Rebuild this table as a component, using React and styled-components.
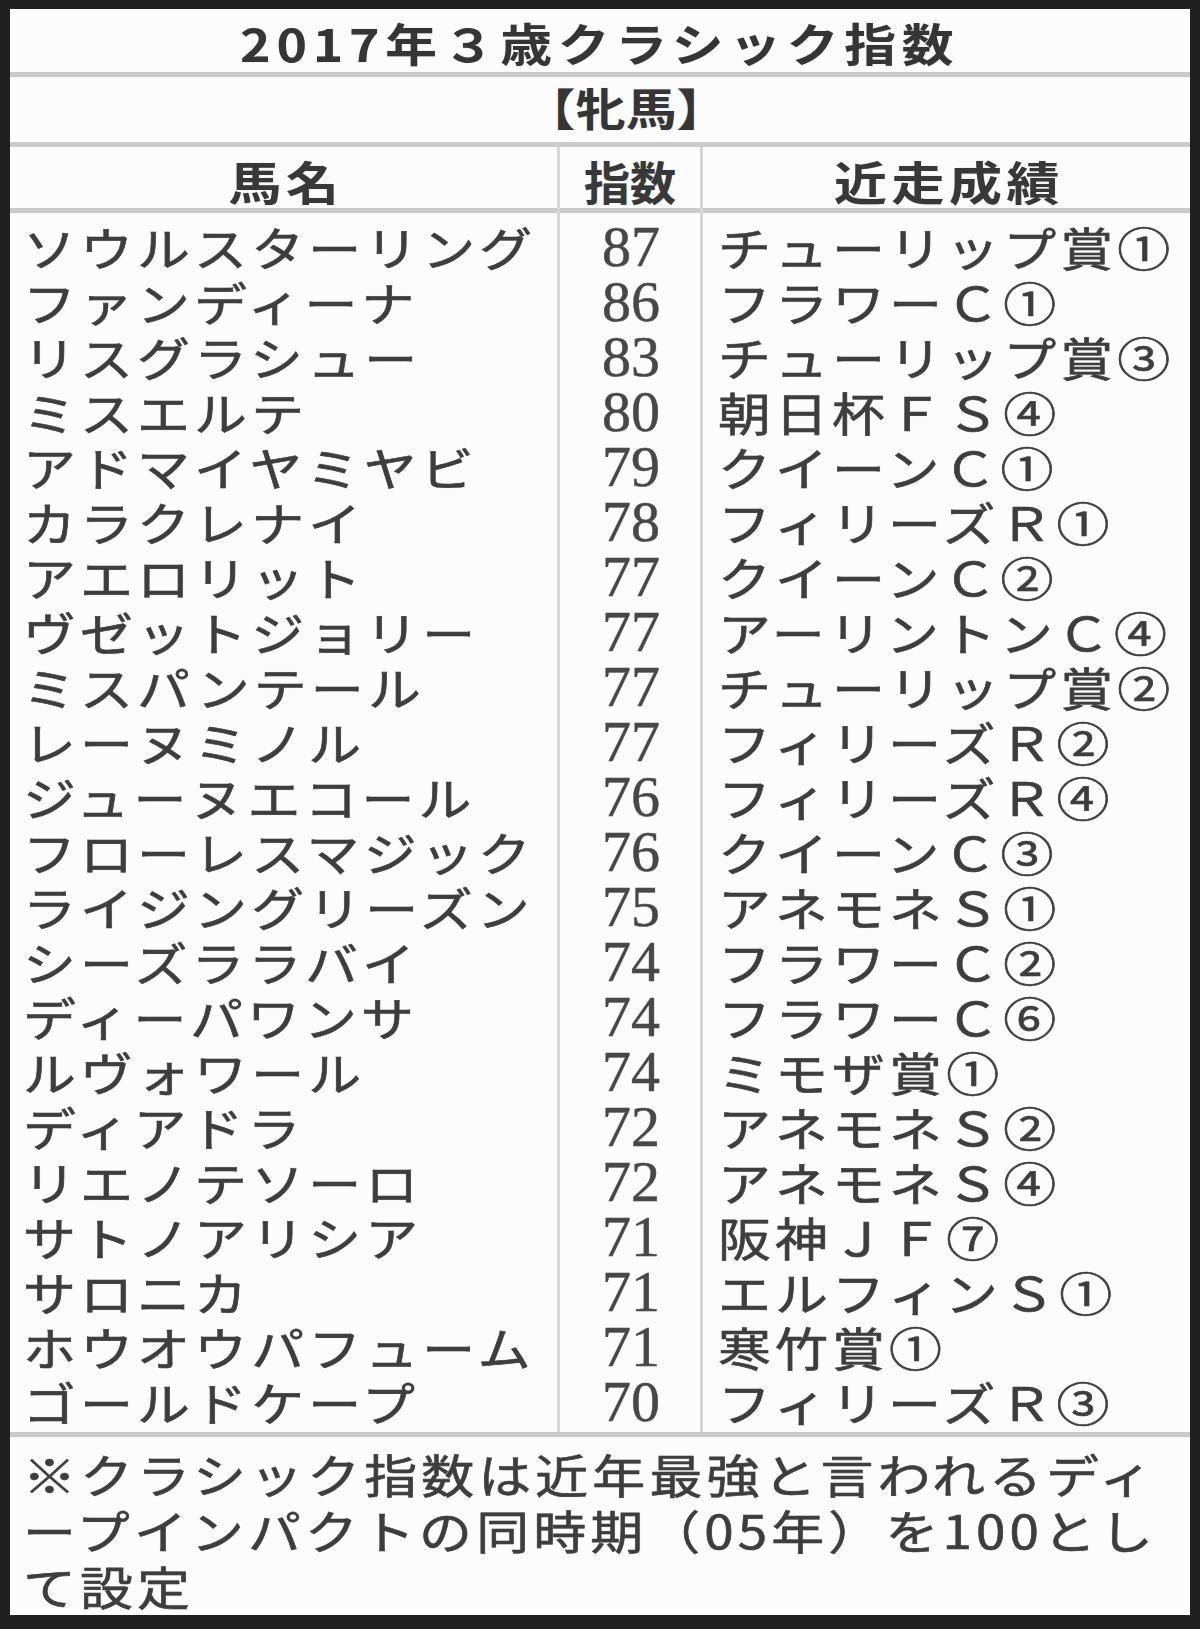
import React from 'react';
import styled, { createGlobalStyle } from 'styled-components';

const horses = [
	['ソウルスターリング', '87', 'チューリップ賞①'],
	['ファンディーナ', '86', 'フラワーＣ①'],
	['リスグラシュー', '83', 'チューリップ賞③'],
	['ミスエルテ', '80', '朝日杯ＦＳ④'],
	['アドマイヤミヤビ', '79', 'クイーンＣ①'],
	['カラクレナイ', '78', 'フィリーズＲ①'],
	['アエロリット', '77', 'クイーンＣ②'],
	['ヴゼットジョリー', '77', 'アーリントンＣ④'],
	['ミスパンテール', '77', 'チューリップ賞②'],
	['レーヌミノル', '77', 'フィリーズＲ②'],
	['ジューヌエコール', '76', 'フィリーズＲ④'],
	['フローレスマジック', '76', 'クイーンＣ③'],
	['ライジングリーズン', '75', 'アネモネＳ①'],
	['シーズララバイ', '74', 'フラワーＣ②'],
	['ディーパワンサ', '74', 'フラワーＣ⑥'],
	['ルヴォワール', '74', 'ミモザ賞①'],
	['ディアドラ', '72', 'アネモネＳ②'],
	['リエノテソーロ', '72', 'アネモネＳ④'],
	['サトノアリシア', '71', '阪神ＪＦ⑦'],
	['サロニカ', '71', 'エルフィンＳ①'],
	['ホウオウパフューム', '71', '寒竹賞①'],
	['ゴールドケープ', '70', 'フィリーズＲ③'],
];

const Global = createGlobalStyle`
	* { box-sizing: border-box; }
	body {
		margin: 0;
		background: #1f1f1f;
	}
`

const Sheet = styled.div`
	margin: 9px 10px 14px 10px;
	width: 1180px;
	background: #fcfcfc;
	color: #3d3d3d;
	font-family: "Noto Sans CJK JP", "Noto Sans", sans-serif;
	font-size: 46px;
	letter-spacing: 3.6px;
	-webkit-text-stroke: 0.6px #444;
	text-shadow: 0 0 1px rgba(40, 40, 40, 0.35);
`

// newspaper type is set wide (平体), so the glyphs get stretched sideways
const Wide = styled.span`
	display: inline-block;
	white-space: nowrap;
	transform: scaleX(1.15);
	transform-origin: ${p => (p.$center ? 'center' : 'left')} center;
`

const Title = styled.div`
	height: 68px;
	padding-top: 4px;
	border-bottom: 5px solid #cbcbcb;
	display: flex;
	align-items: center;
	justify-content: center;
	font-weight: 700;
	font-size: 45px;
	letter-spacing: 5px;
	color: #353535;
	-webkit-text-stroke: 0;
`

const SubTitle = styled.div`
	height: 70px;
	padding: 0 0 6px 52px;
	border-bottom: 5px solid #cbcbcb;
	display: flex;
	align-items: center;
	justify-content: center;
	font-weight: 700;
	font-size: 44px;
	letter-spacing: 0;
	color: #353535;
	-webkit-text-stroke: 0;
`

const Grid = styled.div`
	display: grid;
	grid-template-columns: 547px 143px 1fr;
`

const HeadRow = styled(Grid)`
	height: 66px;
	border-bottom: 5px solid #cbcbcb;
`

const HeadCell = styled.div`
	display: flex;
	align-items: center;
	justify-content: center;
	padding-left: ${p => p.$gap}px;
	font-weight: 700;
	letter-spacing: ${p => p.$gap}px;
	color: #383838;
	-webkit-text-stroke: 0;
	border-left: ${p => (p.$line ? '3px solid #d6d6d6' : 'none')};
`

const Body = styled.div`
	border-bottom: 5px solid #cbcbcb;
`

const Row = styled(Grid)`
	& > div {
		height: 55px;
		line-height: 55px;
	}
	&:first-child > div {
		height: 61px;
		padding-top: 6px;
	}
	&:last-child > div {
		height: 58px;
		padding-bottom: 3px;
	}
`

const Name = styled.div`
	padding-left: 13px;
	white-space: nowrap;
`

const Score = styled.div`
	border-left: 3px solid #d6d6d6;
	text-align: center;
	font-family: "Liberation Serif", "Times New Roman", serif;
	font-size: 58px;
	letter-spacing: 0;
	color: #474747;
	-webkit-text-stroke: 0.4px #555;
	padding-left: 2px;
`

const Race = styled.div`
	border-left: 3px solid #d6d6d6;
	padding-left: 15px;
	white-space: nowrap;
`

const Note = styled.div`
	height: 178px;
	padding: 8px 0 0 13px;
	line-height: 56px;
`

export default function App() {
	return (
		<>
			<Global />
			<Sheet>
				<Title><Wide $center>2017年３歳クラシック指数</Wide></Title>
				<SubTitle><Wide $center>【牝馬】</Wide></SubTitle>
				<HeadRow>
					<HeadCell $gap={4}><Wide $center>馬名</Wide></HeadCell>
					<HeadCell $gap={0} $line>指数</HeadCell>
					<HeadCell $gap={4} $line><Wide $center>近走成績</Wide></HeadCell>
				</HeadRow>
				<Body>
					{horses.map(([name, score, race]) => (
						<Row key={name}>
							<Name><Wide>{name}</Wide></Name>
							<Score>{score}</Score>
							<Race><Wide>{race}</Wide></Race>
						</Row>
					))}
				</Body>
				<Note>
					<Wide>※クラシック指数は近年最強と言われるディ</Wide><br />
					<Wide>ープインパクトの同時期（05年）を100とし</Wide><br />
					<Wide>て設定</Wide>
				</Note>
			</Sheet>
		</>
	);
}
